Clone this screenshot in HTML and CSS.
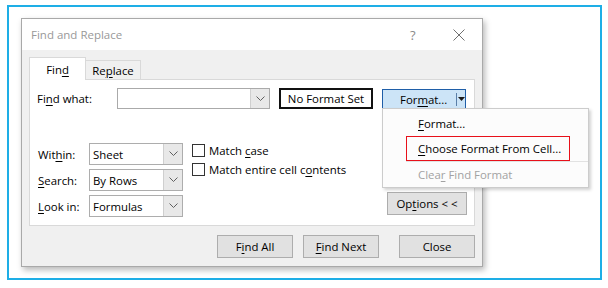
FILE: index.html
```html
<!DOCTYPE html>
<html>
<head>
<meta charset="utf-8">
<title>Find and Replace</title>
<link rel="stylesheet" href="styles.css">
</head>
<body>
<div class="frame">
  <div class="dialog">
    <div class="titlebar">
      <span class="title">Find and Replace</span>
      <span class="help">?</span>
      <span class="close-x"><svg width="12" height="12" viewBox="0 0 12 12"><path d="M0.5 0.5L11.5 11.5M11.5 0.5L0.5 11.5" stroke="#6f6f6f" stroke-width="1"/></svg></span>
    </div>
    <div class="body">
      <div class="tabs">
        <div class="tab active"><span>Fin<u>d</u></span></div>
        <div class="tab"><span>Re<u>p</u>lace</span></div>
      </div>
      <div class="panel">
        <div class="row-find">
          <span class="lbl-find">Fi<u>n</u>d what:</span>
          <div class="combo combo-find">
            <span class="combo-text"></span>
            <span class="combo-btn"><svg width="9" height="6" viewBox="0 0 9 6"><path d="M0.5 0.5L4.5 4.5L8.5 0.5" fill="none" stroke="#606060" stroke-width="1"/></svg></span>
          </div>
          <div class="nfs"><span>No Format Set</span></div>
          <div class="fmt-btn">
            <span class="fmt-main">For<u>m</u>at...</span>
            <span class="fmt-split"></span>
            <span class="fmt-arrow"><svg width="7" height="4" viewBox="0 0 7 4"><path d="M0 0H7L3.5 4Z" fill="#1a1a1a"/></svg></span>
            <div class="menu">
              <div class="menu-item"><span><u>F</u>ormat...</span></div>
              <div class="menu-item highlighted"><span><u>C</u>hoose Format From Cell...</span></div>
              <div class="menu-sep"></div>
              <div class="menu-item disabled"><span>Clea<u>r</u> Find Format</span></div>
            </div>
          </div>
        </div>
        <div class="options-area">
          <div class="selects">
            <div class="sel-row">
              <span class="sel-lbl">Wit<u>h</u>in:</span>
              <div class="combo combo-sel"><span class="combo-text">Sheet</span><span class="combo-btn"><svg width="9" height="6" viewBox="0 0 9 6"><path d="M0.5 0.5L4.5 4.5L8.5 0.5" fill="none" stroke="#606060" stroke-width="1"/></svg></span></div>
            </div>
            <div class="sel-row">
              <span class="sel-lbl"><u>S</u>earch:</span>
              <div class="combo combo-sel"><span class="combo-text">By Rows</span><span class="combo-btn"><svg width="9" height="6" viewBox="0 0 9 6"><path d="M0.5 0.5L4.5 4.5L8.5 0.5" fill="none" stroke="#606060" stroke-width="1"/></svg></span></div>
            </div>
            <div class="sel-row">
              <span class="sel-lbl"><u>L</u>ook in:</span>
              <div class="combo combo-sel"><span class="combo-text">Formulas</span><span class="combo-btn"><svg width="9" height="6" viewBox="0 0 9 6"><path d="M0.5 0.5L4.5 4.5L8.5 0.5" fill="none" stroke="#606060" stroke-width="1"/></svg></span></div>
            </div>
          </div>
          <div class="checks">
            <div class="check-row"><span class="checkbox"></span><span>Match <u>c</u>ase</span></div>
            <div class="check-row"><span class="checkbox"></span><span>Match entire cell c<u>o</u>ntents</span></div>
          </div>
          <div class="opt-wrap">
            <div class="btn btn-options"><span>Op<u>t</u>ions &lt; &lt;</span></div>
          </div>
        </div>
      </div>
      <div class="actions">
        <div class="btn"><span>F<u>i</u>nd All</span></div>
        <div class="btn"><span><u>F</u>ind Next</span></div>
        <div class="btn btn-close"><span>Close</span></div>
      </div>
    </div>
  </div>
</div>
</body>
</html>
```

FILE: styles.css
```css
* { box-sizing: border-box; }
html, body { margin: 0; padding: 0; background: #ffffff; }
body {
  font-family: "Open Sans", "Noto Sans", "DejaVu Sans", sans-serif;
  font-size: 11.4px;
  color: #000000;
}
u { text-decoration: underline; text-underline-offset: 2px; text-decoration-thickness: 1px; }

.frame {
  margin: 5px 0 0 7px;
  width: 595px;
  height: 275px;
  border: 2px solid #1eaee6;
  padding: 11px 0 0 12px;
}

.dialog {
  width: 462px;
  height: 249px;
  border: 1px solid #a9a9a9;
  background: #f0f0f0;
  box-shadow: 2px 3px 6px rgba(0,0,0,0.28);
  display: flex;
  flex-direction: column;
}

.titlebar {
  height: 31px;
  background: #ffffff;
  display: flex;
  align-items: center;
  padding-left: 9px;
}
.title { color: #999999; font-size: 11.5px; flex: 1; }
.help { color: #8a8a8a; font-size: 13px; width: 14px; margin-right: 29px; }
.close-x { width: 12px; height: 12px; margin-right: 17px; display: flex; }

.body {
  flex: 1;
  display: flex;
  flex-direction: column;
  padding: 7px 7px 0 7px;
}

.tabs {
  display: flex;
  align-items: flex-end;
  height: 22px;
}
.tab {
  height: 19px;
  border: 1px solid #d9d9d9;
  border-bottom: none;
  display: flex;
  align-items: center;
  justify-content: center;
  background: #f0f0f0;
  width: 56px;
  margin-left: -1px;
}
.tab.active {
  margin-left: 0;
  width: 57px;
  height: 23px;
  margin-bottom: -1px;
  background: #ffffff;
  position: relative;
  z-index: 1;
  align-items: flex-start;
  padding-top: 4px;
}

.panel {
  height: 147px;
  border: 1px solid #d9d9d9;
  background: #ffffff;
  padding: 8px 7px 0 7px;
}

.row-find {
  display: flex;
  align-items: flex-start;
  height: 21px;
}
.lbl-find { width: 80px; line-height: 21px; }
.combo {
  display: flex;
  border: 1px solid #aaaaaa;
  background: #ffffff;
}
.combo-find { width: 153px; height: 21px; }
.combo-text { flex: 1; padding-left: 4px; line-height: 20px; }
.combo-btn {
  width: 19px;
  background: #e8e8e8;
  border-left: 1px solid #cfcfcf;
  display: flex;
  align-items: center;
  justify-content: center;
}
.nfs {
  margin-left: 9px;
  width: 94px;
  height: 21px;
  border: 2px solid #111111;
  display: flex;
  align-items: center;
  justify-content: center;
}
.fmt-btn {
  position: relative;
  margin-left: 9px;
  margin-top: 1px;
  width: 84px;
  height: 20px;
  border: 1px solid #1f5ea8;
  background: #cce4f7;
  display: flex;
  align-items: center;
}
.fmt-main { width: 73px; padding-left: 17px; }
.fmt-split { width: 1px; height: 13px; background: #5a7fa8; }
.fmt-arrow { flex: 1; display: flex; justify-content: center; }

.menu {
  position: absolute;
  left: -1px;
  top: 100%;
  width: 207px;
  height: 80px;
  background: #fcfcfc;
  border: 1px solid #cccccc;
  box-shadow: 2px 2px 3px rgba(0,0,0,0.18);
  padding-top: 2px;
  z-index: 5;
}
.menu-item {
  height: 25px;
  display: flex;
  align-items: center;
  padding-left: 35px;
}
.menu-item.highlighted {
  margin-left: 23px;
  width: 164px;
  padding-left: 11px;
  border: 1px solid #e8101a;
}
.menu-sep {
  height: 1px;
  background: #e2e2e2;
  margin-left: 23px;
}
.menu-item.disabled { color: #a2a2a2; height: 24px; }

.options-area {
  display: flex;
  margin-top: 34px;
}
.selects {
  display: flex;
  flex-direction: column;
  gap: 4px;
  padding-left: 1px;
}
.sel-row { display: flex; align-items: center; }
.sel-lbl { width: 51px; }
.combo-sel { width: 94px; height: 22px; border-color: #adadad; }
.combo-sel .combo-text { line-height: 21px; padding-left: 3px; }

.checks {
  margin-left: 9px;
  margin-top: -2px;
  display: flex;
  flex-direction: column;
}
.check-row {
  height: 19px;
  display: flex;
  align-items: center;
}
.checkbox {
  width: 13px;
  height: 13px;
  border: 1px solid #333333;
  background: #ffffff;
  margin-right: 4px;
}

.opt-wrap {
  flex: 1;
  display: flex;
  justify-content: flex-end;
  align-items: flex-end;
  padding-bottom: 2px;
}
.btn {
  width: 76px;
  height: 23px;
  border: 1px solid #adadad;
  background: #e1e1e1;
  display: flex;
  align-items: center;
  justify-content: center;
}
.btn-options { width: 80px; }

.actions {
  display: flex;
  justify-content: flex-end;
  gap: 10px;
  margin-top: 9px;
}
.btn-close { margin-left: 10px; }
```
